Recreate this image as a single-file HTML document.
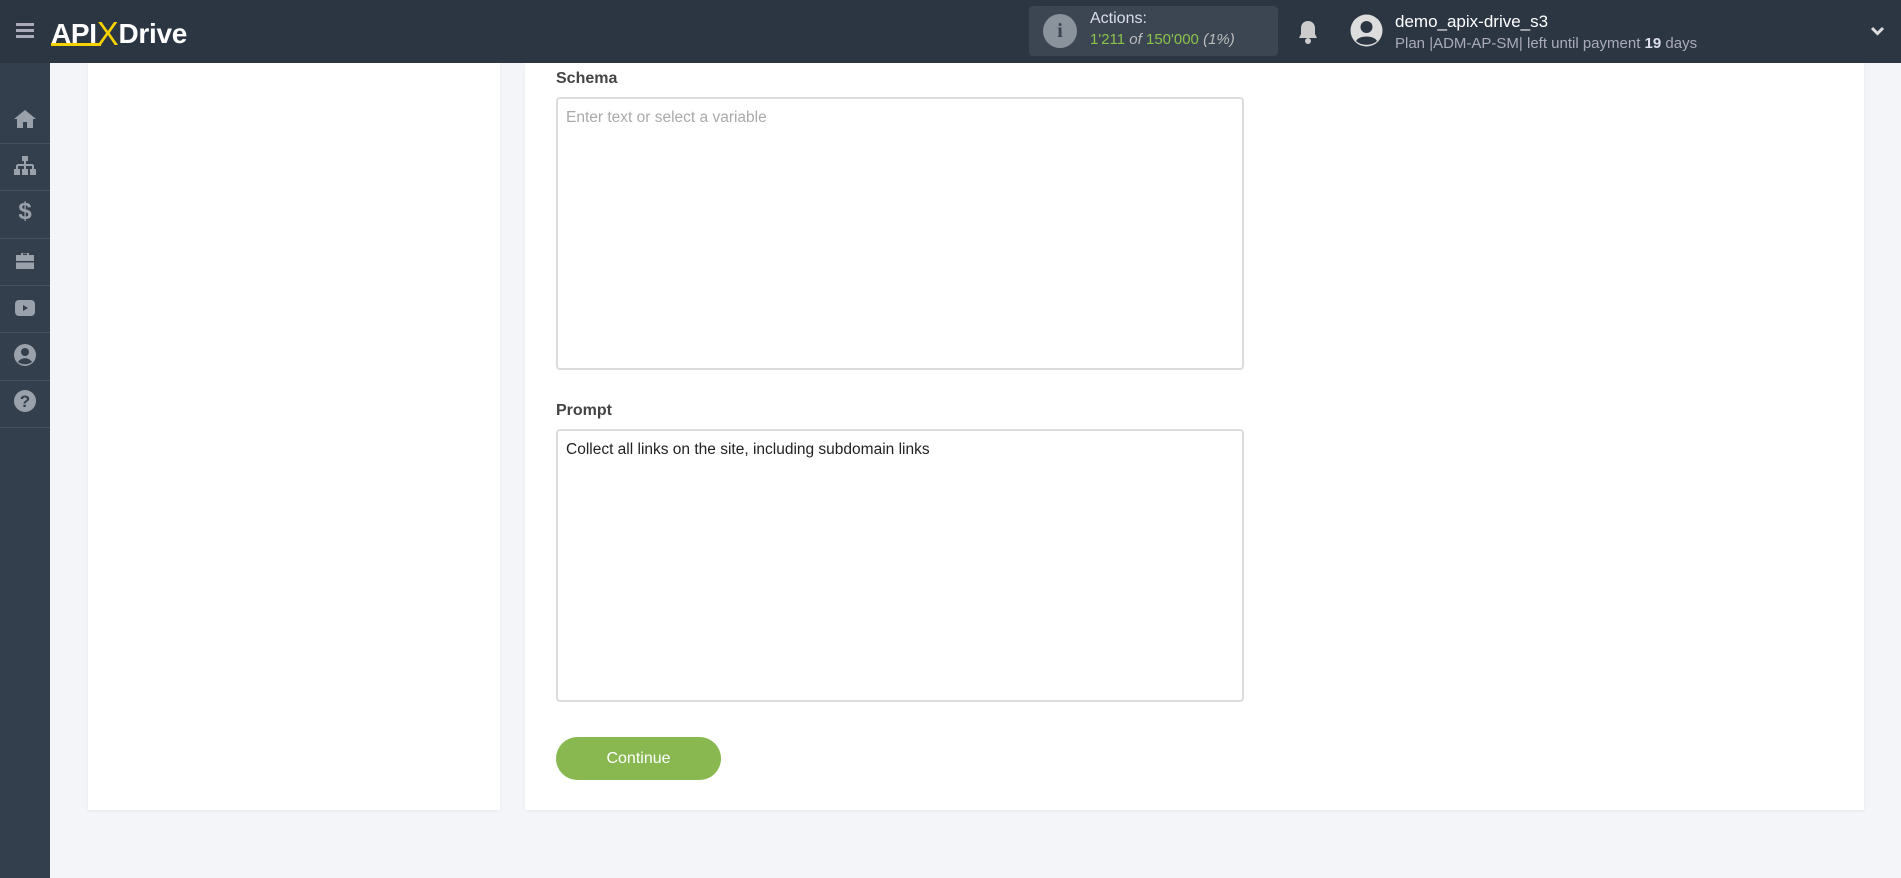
<!DOCTYPE html>
<html><head><meta charset="utf-8"><style>
*{box-sizing:border-box;margin:0;padding:0}
body{width:1901px;height:878px;overflow:hidden;background:#f3f5f9;font-family:"Liberation Sans",sans-serif;position:relative}
.hdr{position:absolute;left:0;top:0;width:1901px;height:63px;background:#2c3643}
.side{position:absolute;left:0;top:63px;width:50px;height:815px;background:#343f4d}
.sep{position:absolute;left:0;width:50px;height:1px;background:#46515f}
.ic{position:absolute;left:13px;width:24px;height:24px}
.card{position:absolute;background:#fff;top:63px;height:747px;box-shadow:0 1px 3px rgba(0,0,0,.06)}
.lbl{position:absolute;left:556px;font-size:16px;font-weight:bold;color:#444}
.ta{position:absolute;left:556px;width:688px;border:2px solid #dcdcdc;border-radius:4px;background:#fff;font-size:15.5px;padding:10px 8px}
.btn{position:absolute;left:556px;top:737px;width:165px;height:43px;border-radius:22px;background:#88b84f;color:#fff;font-size:16px;text-align:center;line-height:43px}
</style></head><body>
<div class="hdr">
 <div style="position:absolute;left:16px;top:23px;width:18px;height:3px;background:#aab;box-shadow:0 6px 0 #aab,0 12px 0 #aab"></div>
 <div style="position:absolute;left:51px;top:13px;font-size:28px;font-weight:bold;color:#fff;letter-spacing:-0.3px">API<span style="color:#f5d200;font-weight:normal;font-size:33px;position:relative;top:2px">X</span>Drive</div>
 <div style="position:absolute;left:51px;top:43px;width:50px;height:3px;background:#f5d200"></div>
 <div style="position:absolute;left:1029px;top:6px;width:249px;height:50px;background:#3b4652;border-radius:4px"></div>
 <div style="position:absolute;left:1043px;top:14px;width:34px;height:34px;border-radius:50%;background:#8a929c;color:#3b4652;font-weight:bold;font-size:20px;text-align:center;line-height:34px;font-family:'Liberation Serif',serif">i</div>
 <div style="position:absolute;left:1090px;top:10px;font-size:16px;color:#dde">Actions:</div>
 <div style="position:absolute;left:1090px;top:31px;font-size:15px;color:#8bc34a">1'211 <i style="color:#bbb">of</i> 150'000 <i style="color:#bbb">(1%)</i></div>
 <svg style="position:absolute;left:1297px;top:19px" width="22" height="26" viewBox="0 0 22 26"><path d="M11 2c-4 0-7 3-7 7v6l-2 4h18l-2-4V9c0-4-3-7-7-7z" fill="#ccc"/><circle cx="11" cy="22" r="3" fill="#ccc"/></svg>
 <svg style="position:absolute;left:1350px;top:14px" width="33" height="33" viewBox="0 0 33 33"><circle cx="16.5" cy="16.5" r="16" fill="#ddd"/><circle cx="16.5" cy="13" r="6" fill="#2c3643"/><path d="M6 27c3-6 18-6 21 0c-5 5-16 5-21 0z" fill="#2c3643"/></svg>
 <div style="position:absolute;left:1395px;top:12px;font-size:17px;color:#fff">demo_apix-drive_s3</div>
 <div style="position:absolute;left:1395px;top:35px;font-size:15px;color:#aab">Plan |ADM-AP-SM| left until payment <b style="color:#dde">19</b> days</div>
 <svg style="position:absolute;left:1870px;top:26px" width="15" height="10" viewBox="0 0 15 10"><path d="M2 2l5.5 5.5L13 2" stroke="#ddd" stroke-width="3" fill="none"/></svg>
</div>
<div class="side">
 <svg class="ic" style="top:44px" viewBox="0 0 24 24"><path d="M12 3L1 12h3v9h6v-6h4v6h6v-9h3z" fill="#9aa1ab"/></svg>
 <div class="sep" style="top:80px"></div>
 <svg class="ic" style="top:91px" viewBox="0 0 24 24"><rect x="9" y="2" width="6" height="5" fill="#9aa1ab"/><path d="M12 7v4M4 11h16M4 11v4M12 11v4M20 11v4" stroke="#9aa1ab" stroke-width="2"/><rect x="1" y="15" width="6" height="6" fill="#9aa1ab"/><rect x="9" y="15" width="6" height="6" fill="#9aa1ab"/><rect x="17" y="15" width="6" height="6" fill="#9aa1ab"/></svg>
 <div class="sep" style="top:127px"></div>
 <div style="position:absolute;left:0;top:135px;width:50px;text-align:center;font-size:24px;font-weight:bold;color:#9aa1ab">$</div>
 <div class="sep" style="top:175px"></div>
 <svg class="ic" style="top:186px" viewBox="0 0 24 24"><path d="M8 6V4h8v2h5v14H3V6z" fill="#9aa1ab"/><rect x="10" y="4.5" width="4" height="1.5" fill="#343f4d"/><rect x="3" y="12" width="18" height="1.5" fill="#343f4d"/></svg>
 <div class="sep" style="top:222px"></div>
 <svg class="ic" style="top:233px" viewBox="0 0 24 24"><rect x="2" y="4" width="20" height="16" rx="4" fill="#9aa1ab"/><path d="M10 9v6l5-3z" fill="#343f4d"/></svg>
 <div class="sep" style="top:269px"></div>
 <svg class="ic" style="top:280px" viewBox="0 0 24 24"><circle cx="12" cy="12" r="11" fill="#9aa1ab"/><circle cx="12" cy="9" r="4" fill="#343f4d"/><path d="M5 19c3-5 11-5 14 0c-4 3-10 3-14 0z" fill="#343f4d"/></svg>
 <div class="sep" style="top:317px"></div>
 <svg class="ic" style="top:326px" viewBox="0 0 24 24"><circle cx="12" cy="12" r="11" fill="#9aa1ab"/><text x="12" y="18" text-anchor="middle" font-size="17" font-weight="bold" fill="#343f4d" font-family="Liberation Sans">?</text></svg>
 <div class="sep" style="top:364px"></div>
</div>
<div class="card" style="left:88px;width:412px"></div>
<div class="card" style="left:525px;width:1339px"></div>
<div class="lbl" style="top:70px">Schema</div>
<div class="ta" style="top:97px;height:273px;color:#aaa">Enter text or select a variable</div>
<div class="lbl" style="top:402px">Prompt</div>
<div class="ta" style="top:429px;height:273px;color:#222">Collect all links on the site, including subdomain links</div>
<div class="btn">Continue</div>
</body></html>
